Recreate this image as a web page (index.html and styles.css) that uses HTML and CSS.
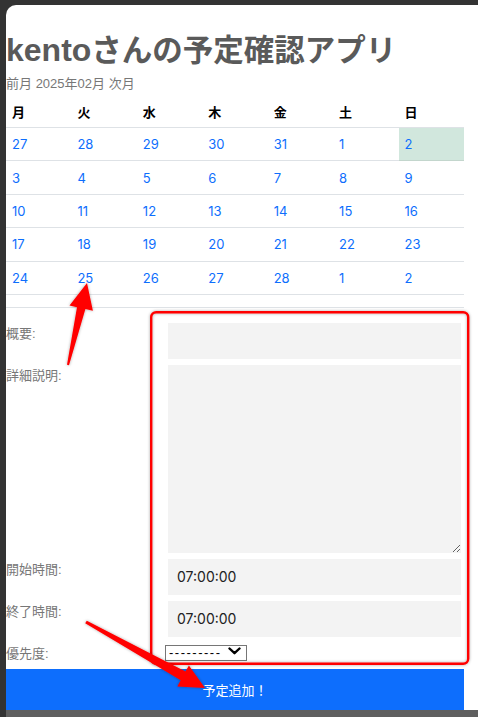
FILE: index.html
```html
<!DOCTYPE html>
<html lang="ja">
<head>
<meta charset="utf-8">
<title>kentoさんの予定確認アプリ</title>
<link rel="stylesheet" href="styles.css">
</head>
<body>
<div class="window">
  <h1 class="title">kento<span class="title-ja">さんの予定確認アプリ</span></h1>
  <p class="month-nav"><a class="nav-link">前月</a> 2025年02月 <a class="nav-link">次月</a></p>
  <table class="calendar">
    <thead>
      <tr><th>月</th><th>火</th><th>水</th><th>木</th><th>金</th><th>土</th><th>日</th></tr>
    </thead>
    <tbody>
      <tr><td>27</td><td>28</td><td>29</td><td>30</td><td>31</td><td>1</td><td class="today">2</td></tr>
      <tr><td>3</td><td>4</td><td>5</td><td>6</td><td>7</td><td>8</td><td>9</td></tr>
      <tr><td>10</td><td>11</td><td>12</td><td>13</td><td>14</td><td>15</td><td>16</td></tr>
      <tr><td>17</td><td>18</td><td>19</td><td>20</td><td>21</td><td>22</td><td>23</td></tr>
      <tr><td>24</td><td>25</td><td>26</td><td>27</td><td>28</td><td>1</td><td>2</td></tr>
    </tbody>
  </table>
  <div class="rule"></div>
  <form class="event-form">
    <div class="form-grid">
      <label class="form-label">概要:</label>
      <input class="field" type="text">
      <label class="form-label">詳細説明:</label>
      <textarea class="field field-area"></textarea>
      <label class="form-label">開始時間:</label>
      <input class="field" type="text" value="07:00:00">
      <label class="form-label">終了時間:</label>
      <input class="field" type="text" value="07:00:00">
      <label class="form-label">優先度:</label>
      <div class="select-wrap">
        <select class="select"><option>---------</option></select>
        <svg class="chevron" width="13" height="8" viewBox="0 0 13 8"><path d="M1.5 1.5 L6.5 6.2 L11.5 1.5" fill="none" stroke="#000" stroke-width="2.4" stroke-linecap="round" stroke-linejoin="round"/></svg>
      </div>
    </div>
    <button class="submit" type="button">予定追加！</button>
  </form>
</div>
<div class="statusbar"></div>
<svg class="annotations" width="478" height="717" viewBox="0 0 478 717">
  <defs>
    <filter id="glow" x="-10%" y="-10%" width="120%" height="120%">
      <feDropShadow dx="0" dy="0" stdDeviation="1.6" flood-color="#000" flood-opacity="0.35"/>
    </filter>
  </defs>
  <rect x="151.2" y="312.2" width="317" height="351.6" rx="5" fill="none" stroke="#ff0000" stroke-width="2.4" filter="url(#glow)"/>
  <polygon points="67,364.8 77,307.2 69.5,305.4 87,283 92.9,310.8 85.4,309 69,365.2" fill="#ff0000" filter="url(#glow)"/>
  <polygon points="86.8,620.8 185.5,671.5 188.9,665.4 205,688 177.3,686.4 180.7,680.3 85.2,623.2" fill="#ff0000" filter="url(#glow)"/>
</svg>
</body>
</html>
```

FILE: styles.css
```css
html, body {
  margin: 0;
  padding: 0;
}

body {
  position: relative;
  width: 478px;
  height: 717px;
  overflow: hidden;
  background: #333333;
  font-family: "Liberation Sans", "Noto Sans CJK JP", sans-serif;
}

.window {
  margin: 5px 0 0 6px;
  width: 472px;
  height: 705px;
  background: #ffffff;
  border-top-left-radius: 10px;
  overflow: hidden;
}

.statusbar {
  margin-left: 6px;
  height: 7px;
  background: #5f5f5f;
}

.title {
  margin: 0;
  padding-top: 25px;
  font-size: 32px;
  line-height: 40px;
  font-weight: 700;
  color: #5a5a5a;
  white-space: nowrap;
}

.title-ja {
  font-family: "Noto Sans CJK JP", sans-serif;
  font-size: 30.5px;
  line-height: 30px;
}

.month-nav {
  margin: 5px 0 0;
  font-size: 13px;
  line-height: 18px;
  color: #777777;
}

.nav-link {
  color: #777777;
}

.calendar {
  margin-top: 2px;
  width: 458px;
  table-layout: fixed;
  border-collapse: separate;
  border-spacing: 0;
}

.calendar th {
  height: 32px;
  padding: 0 6px;
  text-align: left;
  font-size: 13px;
  font-weight: 700;
  color: #000000;
  border-bottom: 1px solid #dee2e6;
}

.calendar td {
  height: 32.4px;
  padding: 0 6px;
  font-family: Inter, sans-serif;
  font-size: 13px;
  color: #0d6efd;
  border-bottom: 1px solid #dee2e6;
}

.calendar td.today {
  background: #d1e7dd;
  border-bottom-color: #c3d6cd;
}

.rule {
  width: 458px;
  height: 12px;
  border-bottom: 1px solid #dee2e6;
}

.event-form {
  padding-top: 15px;
}

.form-grid {
  display: grid;
  grid-template-columns: 162px 293px;
  row-gap: 6px;
}

.form-label {
  padding-top: 1px;
  font-size: 13px;
  line-height: 20px;
  color: #777777;
  white-space: nowrap;
}

.field {
  display: block;
  box-sizing: border-box;
  width: 293px;
  height: 36px;
  margin: 0;
  padding: 0 9px;
  border: 0;
  border-radius: 0;
  outline: none;
  background: #f3f3f3;
  font-family: Inter, sans-serif;
  font-size: 14px;
  color: #222222;
}

.field-area {
  height: 188px;
  resize: vertical;
}

.select-wrap {
  position: relative;
  width: 82px;
  height: 16px;
  margin-left: -3px;
}

.select {
  appearance: none;
  -webkit-appearance: none;
  box-sizing: border-box;
  width: 82px;
  height: 16px;
  margin: 0;
  padding: 0 0 0 3px;
  border: 1px solid #767676;
  border-radius: 0;
  background: #ffffff;
  font-family: "Liberation Sans", sans-serif;
  font-size: 13px;
  line-height: 14px;
  letter-spacing: 1.5px;
  color: #000000;
}

.chevron {
  position: absolute;
  right: 6px;
  top: 4px;
  pointer-events: none;
}

.submit {
  display: block;
  width: 458px;
  height: 41px;
  margin: 5px 0 0;
  padding: 0;
  border: 0;
  background: #0d6efd;
  color: #ffffff;
  font-family: "Liberation Sans", "Noto Sans CJK JP", sans-serif;
  font-size: 13px;
}

.annotations {
  position: absolute;
  left: 0;
  top: 0;
  pointer-events: none;
}
```
